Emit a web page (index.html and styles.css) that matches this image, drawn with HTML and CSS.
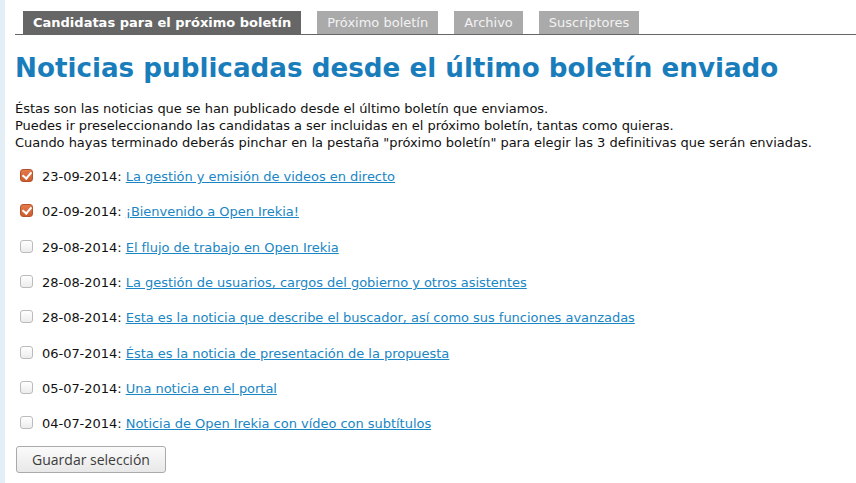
FILE: index.html
```html
<!DOCTYPE html>
<html lang="es">
<head>
<meta charset="utf-8">
<title>Boletín</title>
<link rel="stylesheet" href="styles.css">
</head>
<body>
<div class="strip"></div>
<main class="content">
  <nav class="tabs">
    <a class="tab active">Candidatas para el próximo boletín</a>
    <a class="tab">Próximo boletín</a>
    <a class="tab">Archivo</a>
    <a class="tab">Suscriptores</a>
  </nav>
  <h1 class="title">Noticias publicadas desde el último boletín enviado</h1>
  <p class="intro">Éstas son las noticias que se han publicado desde el último boletín que enviamos.<br>Puedes ir preseleccionando las candidatas a ser incluidas en el próximo boletín, tantas como quieras.<br>Cuando hayas terminado deberás pinchar en la pestaña "próximo boletín" para elegir las 3 definitivas que serán enviadas.</p>
  <form class="list">
    <label class="item"><input type="checkbox" class="cb" checked> <span>23-09-2014: <a href="#">La gestión y emisión de videos en directo</a></span></label>
    <label class="item"><input type="checkbox" class="cb" checked> <span>02-09-2014: <a href="#">¡Bienvenido a Open Irekia!</a></span></label>
    <label class="item"><input type="checkbox" class="cb"> <span>29-08-2014: <a href="#">El flujo de trabajo en Open Irekia</a></span></label>
    <label class="item"><input type="checkbox" class="cb"> <span>28-08-2014: <a href="#">La gestión de usuarios, cargos del gobierno y otros asistentes</a></span></label>
    <label class="item"><input type="checkbox" class="cb"> <span>28-08-2014: <a href="#">Esta es la noticia que describe el buscador, así como sus funciones avanzadas</a></span></label>
    <label class="item"><input type="checkbox" class="cb"> <span>06-07-2014: <a href="#">Ésta es la noticia de presentación de la propuesta</a></span></label>
    <label class="item"><input type="checkbox" class="cb"> <span>05-07-2014: <a href="#">Una noticia en el portal</a></span></label>
    <label class="item"><input type="checkbox" class="cb"> <span>04-07-2014: <a href="#">Noticia de Open Irekia con vídeo con subtítulos</a></span></label>
    <button type="button" class="save">Guardar selección</button>
  </form>
</main>
</body>
</html>
```
FILE: styles.css
```css
html, body {
  margin: 0;
  padding: 0;
  background: #fff;
}
body {
  display: flex;
  min-height: 483px;
  font-family: "DejaVu Sans", sans-serif;
  font-size: 13px;
  color: #222;
}
.strip {
  width: 5px;
  flex: none;
  background: #e4eef6;
}
.content {
  flex: 1;
  padding-left: 10px;
  padding-top: 11px;
}
.tabs {
  display: flex;
  gap: 16px;
  padding-left: 8px;
  border-bottom: 1px solid #666;
  height: 23px;
}
.tab {
  display: block;
  background: #aaa;
  color: #f2f2f2;
  padding: 0 10px;
  line-height: 23px;
  font-size: 13px;
}
.tab.active {
  background: #666;
  color: #fff;
  font-weight: bold;
}
.title {
  margin: 15px 0 0;
  font-size: 26.2px;
  font-weight: bold;
  color: #1a7dbb;
  line-height: 36px;
  white-space: nowrap;
}
.intro {
  margin: 14px 0 0;
  line-height: 17px;
  color: #111;
  letter-spacing: -0.03px;
}
.list {
  margin-top: 8px;
  display: flex;
  flex-direction: column;
  align-items: flex-start;
}
.item {
  display: flex;
  align-items: center;
  height: 35.3px;
  padding-left: 5px;
  color: #111;
  letter-spacing: -0.03px;
}
.item a {
  color: #1a86c4;
}
.cb {
  appearance: none;
  -webkit-appearance: none;
  width: 13px;
  height: 13px;
  margin: 0 9px 2px 0;
  border: 1px solid #bbb;
  border-radius: 3px;
  background: linear-gradient(#fff, #ececec);
  box-sizing: border-box;
  position: relative;
}
.cb:checked {
  border-color: #b6532a;
  background: linear-gradient(#e3794c, #cf5d2d);
}
.cb:checked::after {
  content: "";
  position: absolute;
  left: 3px;
  top: 0px;
  width: 4px;
  height: 7px;
  border: solid #fff;
  border-width: 0 2px 2px 0;
  transform: rotate(40deg);
}
.save {
  margin: 5px 0 0 1px;
  width: 150px;
  height: 27px;
  font-family: "Open Sans", "DejaVu Sans", sans-serif;
  font-size: 14px;
  color: #3c3c3c;
  border: 1px solid #aaa;
  border-radius: 3px;
  background: linear-gradient(#fbfbfb, #e8e8e8);
  padding: 0;
}
```
